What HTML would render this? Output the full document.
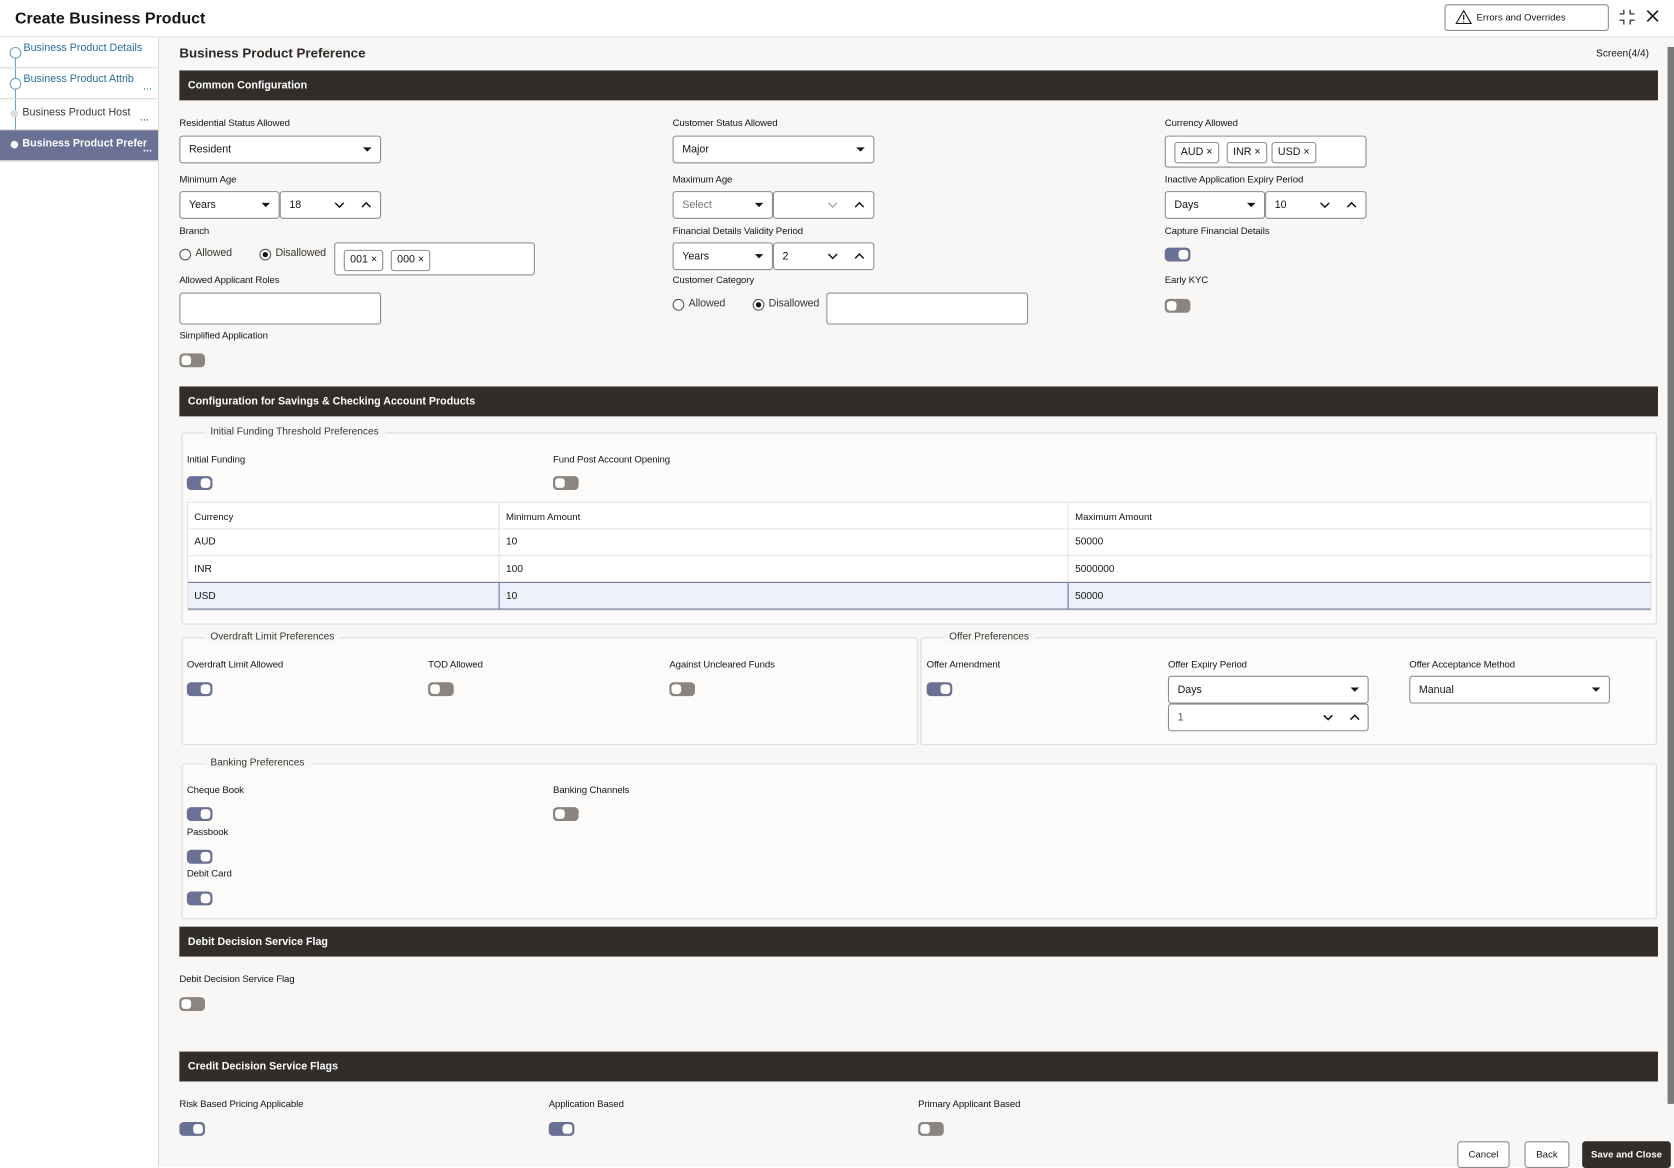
<!DOCTYPE html>
<html><head><meta charset="utf-8"><style>
html,body{margin:0;padding:0;width:1674px;height:1167px;overflow:hidden;background:#fff}
#w{position:absolute;left:0;top:0;width:1568px;height:1093px;transform:scale(1.0676);transform-origin:0 0;font-family:"Liberation Sans",sans-serif;color:#161513;background:#f8f7f6}
.a{position:absolute}
.l{position:absolute;font-size:9px;color:#161513;white-space:nowrap;letter-spacing:-0.1px}
.i{position:absolute;border:1px solid #8f8b87;border-radius:3px;background:#fff;height:24px;font-size:10px;box-sizing:content-box}
.i span{position:absolute;left:8px;top:7px}
.dd{position:absolute;right:8px;top:10px;width:0;height:0;border-left:4px solid transparent;border-right:4px solid transparent;border-top:4px solid #161513}
.cv{position:absolute;top:8px;width:10px;height:8px}
.t{position:absolute;width:22px;height:11px;border-radius:4px;background:#8a8580;border:1px solid #8a8580}
.t::after{content:"";position:absolute;left:1px;top:1px;width:9px;height:9px;border-radius:3px;background:#fff}
.t.on{background:#6b7194;border-color:#6b7194}
.t.on::after{left:12px}
.bar{position:absolute;left:168px;width:1385px;height:28px;background:#312d2a;color:#fff;font-size:10px;font-weight:bold}
.bar span{position:absolute;left:8px;top:9px}
.fs{position:absolute;border:1px solid #dedbd8;border-radius:3px;background:#fcfbfa}
.lg{position:absolute;top:-7px;left:20px;background:#f8f7f6;padding:0 6px;font-size:9.5px;color:#3a3632}
.chip{position:absolute;top:4px;height:18px;border:1px solid #8f8b87;border-radius:3px;font-size:10px;line-height:18px;padding:0 5px;background:#fff}
.rad{position:absolute;width:9px;height:9px;border:1px solid #555;border-radius:50%;background:#fff}
.rad.on::after{content:"";position:absolute;left:2px;top:2px;width:5px;height:5px;border-radius:50%;background:#161513}
.btn{position:absolute;top:1069px;height:23px;border:1px solid #8f8b87;border-radius:3px;background:#fff;font-size:9px;text-align:center;line-height:23px}
.si{position:absolute;left:0;width:148px;height:28px;border-bottom:1px solid #dcd9d6;font-size:10px;color:#2a6e96}
</style></head><body><div id="w">
<svg width="0" height="0" style="position:absolute"><defs>
<symbol id="dn" viewBox="0 0 10 8"><path d="M1 2 L5 6 L9 2" fill="none" stroke="#161513" stroke-width="1.4"/></symbol>
<symbol id="up" viewBox="0 0 10 8"><path d="M1 6 L5 2 L9 6" fill="none" stroke="#161513" stroke-width="1.4"/></symbol>
</defs></svg>
<div class="a" style="left:0;top:0;width:1568px;height:34px;background:#fff;border-bottom:1px solid #e4e2df"></div>
<div class="a" style="left:14px;top:9px;font-size:15px;font-weight:bold">Create Business Product</div>
<div class="a" style="left:1353px;top:4px;width:152px;height:23px;border:1px solid #8f8b87;border-radius:3px;background:#fff;font-size:9px;line-height:23px"><svg class="a" style="left:9px;top:4px" width="16" height="14" viewBox="0 0 16 14"><path d="M8 1 L15 13 L1 13 Z" fill="none" stroke="#161513" stroke-width="1"/><path d="M8 5 V9.5 M8 11 V12" stroke="#161513" stroke-width="1.2"/></svg><span style="position:absolute;left:29px">Errors and Overrides</span></div>
<svg class="a" style="left:1516px;top:8px" width="16" height="16" viewBox="0 0 16 16"><path d="M5 1 V5 H1 M11 1 V5 H15 M5 15 V11 H1 M11 15 V11 H15" fill="none" stroke="#333" stroke-width="1.2"/></svg>
<svg class="a" style="left:1542px;top:9px" width="12" height="12" viewBox="0 0 12 12"><path d="M1 1 L11 11 M11 1 L1 11" stroke="#161513" stroke-width="1.5"/></svg>

<div class="a" style="left:0;top:35px;width:148px;height:1058px;background:#fff;border-right:1px solid #dcd9d6"></div>
<div class="a" style="left:14px;top:50px;width:1px;height:85px;background:#6aa3c6"></div>
<div class="si" style="top:35px"><span class="a" style="left:22px;top:5px">Business Product Details</span><span class="a" style="left:9px;top:9px;width:9px;height:9px;border:1px solid #6aa3c6;border-radius:50%;background:#fff"></span></div>
<div class="si" style="top:64px"><span class="a" style="left:22px;top:5px">Business Product Attrib</span><span class="a" style="left:134px;top:12px">...</span><span class="a" style="left:9px;top:9px;width:9px;height:9px;border:1px solid #6aa3c6;border-radius:50%;background:#fff"></span></div>
<div class="si" style="top:93px;color:#3a3632"><span class="a" style="left:21px;top:7px">Business Product Host</span><span class="a" style="left:131px;top:12px">...</span><span class="a" style="left:10px;top:10px;width:7px;height:7px;background:#ddd;border-radius:50%"></span></div>
<div class="si" style="top:122px;background:#6b7194;color:#fff;font-weight:bold"><span class="a" style="left:21px;top:7px">Business Product Prefer</span><span class="a" style="left:134px;top:12px">...</span><span class="a" style="left:10px;top:10px;width:7px;height:7px;background:#fff;border-radius:50%"></span></div>

<div class="a" style="left:168px;top:43px;font-size:12.5px;font-weight:bold;color:#2b2825">Business Product Preference</div>
<div class="a" style="left:1495px;top:45px;font-size:9.5px">Screen(4/4)</div>
<div class="a" style="left:1562px;top:44px;width:6px;height:990px;background:#7a7a7a"></div>

<div class="bar" style="top:66px"><span>Common Configuration</span></div>

<div class="l" style="left:168px;top:110px">Residential Status Allowed</div>
<div class="i" style="left:168px;top:127px;width:187px"><span>Resident</span><i class="dd"></i></div>
<div class="l" style="left:630px;top:110px">Customer Status Allowed</div>
<div class="i" style="left:630px;top:127px;width:187px"><span>Major</span><i class="dd"></i></div>
<div class="l" style="left:1091px;top:110px">Currency Allowed</div>
<div class="i" style="left:1091px;top:127px;width:187px;height:28px"><div class="chip" style="left:8px;top:5px">AUD ×</div><div class="chip" style="left:57px;top:5px">INR ×</div><div class="chip" style="left:99px;top:5px">USD ×</div></div>

<div class="l" style="left:168px;top:163px">Minimum Age</div>
<div class="i" style="left:168px;top:179px;width:92px"><span>Years</span><i class="dd"></i></div>
<div class="i" style="left:262px;top:179px;width:93px"><span>18</span><svg class="cv" style="left:50px"><use href="#dn"/></svg><svg class="cv" style="left:75px"><use href="#up"/></svg></div>
<div class="l" style="left:630px;top:163px">Maximum Age</div>
<div class="i" style="left:630px;top:179px;width:92px"><span style="color:#777">Select</span><i class="dd"></i></div>
<div class="i" style="left:724px;top:179px;width:93px"><svg class="cv" style="left:50px;opacity:.35"><use href="#dn"/></svg><svg class="cv" style="left:75px"><use href="#up"/></svg></div>
<div class="l" style="left:1091px;top:163px">Inactive Application Expiry Period</div>
<div class="i" style="left:1091px;top:179px;width:92px"><span>Days</span><i class="dd"></i></div>
<div class="i" style="left:1185px;top:179px;width:93px"><span>10</span><svg class="cv" style="left:50px"><use href="#dn"/></svg><svg class="cv" style="left:75px"><use href="#up"/></svg></div>

<div class="l" style="left:168px;top:211px">Branch</div>
<div class="rad" style="left:168px;top:233px"></div><div class="l" style="left:183px;top:232px;font-size:10px;color:#3a3632">Allowed</div>
<div class="rad on" style="left:243px;top:233px"></div><div class="l" style="left:258px;top:232px;font-size:10px;color:#3a3632">Disallowed</div>
<div class="i" style="left:313px;top:227px;width:186px;height:29px"><div class="chip" style="left:8px;top:6px">001 ×</div><div class="chip" style="left:52px;top:6px">000 ×</div></div>
<div class="l" style="left:630px;top:211px">Financial Details Validity Period</div>
<div class="i" style="left:630px;top:227px;width:92px"><span>Years</span><i class="dd"></i></div>
<div class="i" style="left:724px;top:227px;width:93px"><span>2</span><svg class="cv" style="left:50px"><use href="#dn"/></svg><svg class="cv" style="left:75px"><use href="#up"/></svg></div>
<div class="l" style="left:1091px;top:211px">Capture Financial Details</div>
<div class="t on" style="left:1091px;top:232px"></div>

<div class="l" style="left:168px;top:257px">Allowed Applicant Roles</div>
<div class="i" style="left:168px;top:274px;width:187px;height:28px"></div>
<div class="l" style="left:630px;top:257px">Customer Category</div>
<div class="rad" style="left:630px;top:280px"></div><div class="l" style="left:645px;top:279px;font-size:10px;color:#3a3632">Allowed</div>
<div class="rad on" style="left:705px;top:280px"></div><div class="l" style="left:720px;top:279px;font-size:10px;color:#3a3632">Disallowed</div>
<div class="i" style="left:774px;top:274px;width:187px;height:28px"></div>
<div class="l" style="left:1091px;top:257px">Early KYC</div>
<div class="t" style="left:1091px;top:280px"></div>

<div class="l" style="left:168px;top:309px">Simplified Application</div>
<div class="t" style="left:168px;top:331px"></div>

<div class="bar" style="top:362px"><span>Configuration for Savings &amp; Checking Account Products</span></div>

<div class="fs" style="left:170px;top:405px;width:1380px;height:178px"><div class="lg">Initial Funding Threshold Preferences</div></div>
<div class="l" style="left:175px;top:425px">Initial Funding</div>
<div class="t on" style="left:175px;top:446px"></div>
<div class="l" style="left:518px;top:425px">Fund Post Account Opening</div>
<div class="t" style="left:518px;top:446px"></div>
<div class="a" style="left:175px;top:470px;width:1370px;height:100px;background:#fff;border:1px solid #e4e2df;font-size:9.5px">
 <div class="a" style="left:0;top:24px;width:1370px;height:1px;background:#e4e2df"></div>
 <div class="a" style="left:0;top:49px;width:1370px;height:1px;background:#e4e2df"></div>
 <div class="a" style="left:0;top:74px;width:1370px;height:26px;background:#eef1fb;border-top:1px solid #6b7194;border-bottom:1px solid #6b7194;box-sizing:border-box"></div>
 <div class="a" style="left:291px;top:0;width:1px;height:100px;background:#e4e2df"></div>
 <div class="a" style="left:824px;top:0;width:1px;height:100px;background:#e4e2df"></div>
 <div class="a" style="left:291px;top:74px;width:1px;height:26px;background:#6b7194"></div>
 <div class="a" style="left:824px;top:74px;width:1px;height:26px;background:#6b7194"></div>
 <div class="a" style="left:6px;top:8px;font-size:9px">Currency</div><div class="a" style="left:298px;top:8px;font-size:9px">Minimum Amount</div><div class="a" style="left:831px;top:8px;font-size:9px">Maximum Amount</div>
 <div class="a" style="left:6px;top:31px">AUD</div><div class="a" style="left:298px;top:31px">10</div><div class="a" style="left:831px;top:31px">50000</div>
 <div class="a" style="left:6px;top:57px">INR</div><div class="a" style="left:298px;top:57px">100</div><div class="a" style="left:831px;top:57px">5000000</div>
 <div class="a" style="left:6px;top:82px">USD</div><div class="a" style="left:298px;top:82px">10</div><div class="a" style="left:831px;top:82px">50000</div>
</div>

<div class="fs" style="left:170px;top:597px;width:688px;height:99px"><div class="lg">Overdraft Limit Preferences</div></div>
<div class="l" style="left:175px;top:617px">Overdraft Limit Allowed</div><div class="t on" style="left:175px;top:639px"></div>
<div class="l" style="left:401px;top:617px">TOD Allowed</div><div class="t" style="left:401px;top:639px"></div>
<div class="l" style="left:627px;top:617px">Against Uncleared Funds</div><div class="t" style="left:627px;top:639px"></div>

<div class="fs" style="left:862px;top:597px;width:688px;height:99px"><div class="lg">Offer Preferences</div></div>
<div class="l" style="left:868px;top:617px">Offer Amendment</div><div class="t on" style="left:868px;top:639px"></div>
<div class="l" style="left:1094px;top:617px">Offer Expiry Period</div>
<div class="i" style="left:1094px;top:633px;width:186px"><span>Days</span><i class="dd"></i></div>
<div class="i" style="left:1094px;top:659px;width:186px"><span style="color:#555">1</span><svg class="cv" style="left:144px"><use href="#dn"/></svg><svg class="cv" style="left:169px"><use href="#up"/></svg></div>
<div class="l" style="left:1320px;top:617px">Offer Acceptance Method</div>
<div class="i" style="left:1320px;top:633px;width:186px"><span>Manual</span><i class="dd"></i></div>

<div class="fs" style="left:170px;top:715px;width:1380px;height:144px"><div class="lg">Banking Preferences</div></div>
<div class="l" style="left:175px;top:735px">Cheque Book</div><div class="t on" style="left:175px;top:756px"></div>
<div class="l" style="left:518px;top:735px">Banking Channels</div><div class="t" style="left:518px;top:756px"></div>
<div class="l" style="left:175px;top:774px">Passbook</div><div class="t on" style="left:175px;top:796px"></div>
<div class="l" style="left:175px;top:813px">Debit Card</div><div class="t on" style="left:175px;top:835px"></div>

<div class="bar" style="top:868px"><span>Debit Decision Service Flag</span></div>
<div class="l" style="left:168px;top:912px">Debit Decision Service Flag</div><div class="t" style="left:168px;top:934px"></div>

<div class="bar" style="top:985px"><span>Credit Decision Service Flags</span></div>
<div class="l" style="left:168px;top:1029px">Risk Based Pricing Applicable</div><div class="t on" style="left:168px;top:1051px"></div>
<div class="l" style="left:514px;top:1029px">Application Based</div><div class="t on" style="left:514px;top:1051px"></div>
<div class="l" style="left:860px;top:1029px">Primary Applicant Based</div><div class="t" style="left:860px;top:1051px"></div>

<div class="btn" style="left:1365px;width:47px">Cancel</div>
<div class="btn" style="left:1428px;width:40px">Back</div>
<div class="btn" style="left:1482px;width:81px;background:#312d2a;color:#fff;border-color:#312d2a;font-weight:bold">Save and Close</div>
</div></body></html>
